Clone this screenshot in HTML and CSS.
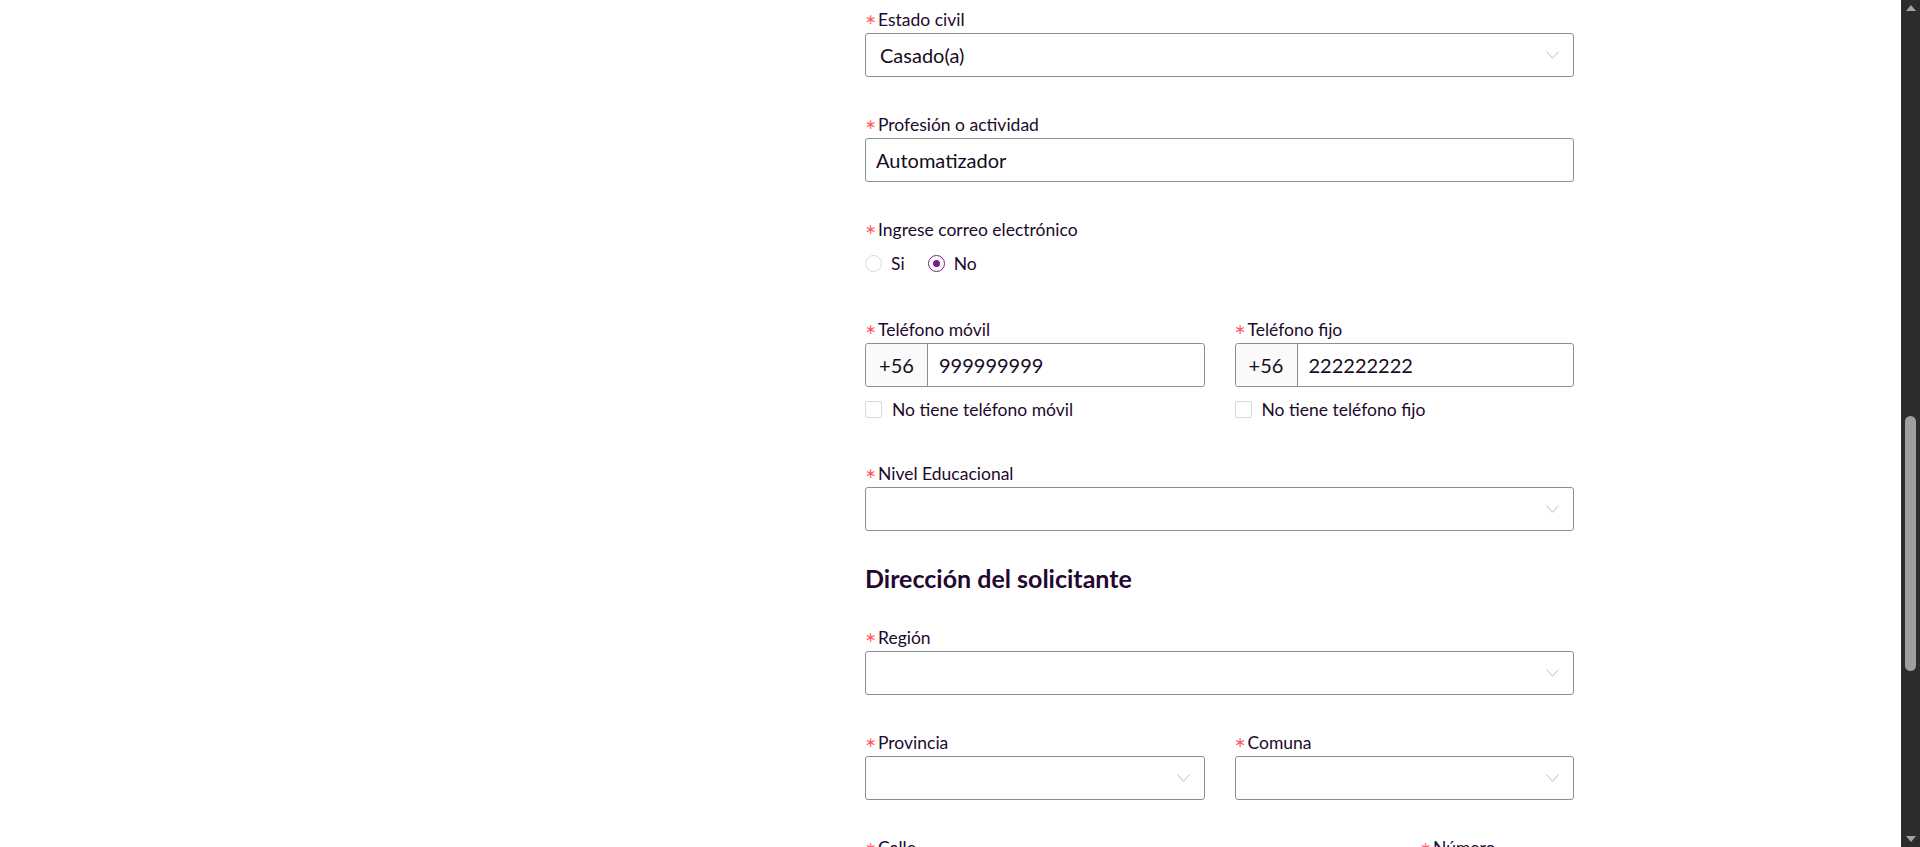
FILE: index.html
```html
<!DOCTYPE html>
<html lang="es">
<head>
<meta charset="utf-8">
<title>Formulario</title>
<link rel="stylesheet" href="styles.css">
</head>
<body>
<div class="screen">
  <main class="page">
    <form class="form">
      <div class="item">
        <div class="label"><span class="req">∗</span>Estado civil</div>
        <div class="control select"><span class="value">Casado(a)</span><svg class="chev" width="13" height="8" viewBox="0 0 13 8"><polyline points="0.5,0.5 6.5,7.3 12.5,0.5" fill="none" stroke="#bcbcbc" stroke-width="1"/></svg></div>
      </div>

      <div class="item">
        <div class="label"><span class="req">∗</span>Profesión o actividad</div>
        <div class="control input"><span class="value">Automatizador</span></div>
      </div>

      <div class="item">
        <div class="label"><span class="req">∗</span>Ingrese correo electrónico</div>
        <div class="radios">
          <span class="radio-opt"><span class="radio"></span>Si</span>
          <span class="radio-opt"><span class="radio checked"></span>No</span>
        </div>
      </div>

      <div class="item item-phone">
        <div class="cols">
          <div class="col">
            <div class="label"><span class="req">∗</span>Teléfono móvil</div>
            <div class="control phone"><span class="addon">+56</span><span class="value">999999999</span></div>
            <div class="check"><span class="box"></span>No tiene teléfono móvil</div>
          </div>
          <div class="col">
            <div class="label"><span class="req">∗</span>Teléfono fijo</div>
            <div class="control phone"><span class="addon">+56</span><span class="value">222222222</span></div>
            <div class="check"><span class="box"></span>No tiene teléfono fijo</div>
          </div>
        </div>
      </div>

      <div class="item item-last">
        <div class="label"><span class="req">∗</span>Nivel Educacional</div>
        <div class="control select"><span class="value"></span><svg class="chev" width="13" height="8" viewBox="0 0 13 8"><polyline points="0.5,0.5 6.5,7.3 12.5,0.5" fill="none" stroke="#bcbcbc" stroke-width="1"/></svg></div>
      </div>

      <h2 class="heading">Dirección del solicitante</h2>

      <div class="item">
        <div class="label"><span class="req">∗</span>Región</div>
        <div class="control select"><span class="value"></span><svg class="chev" width="13" height="8" viewBox="0 0 13 8"><polyline points="0.5,0.5 6.5,7.3 12.5,0.5" fill="none" stroke="#bcbcbc" stroke-width="1"/></svg></div>
      </div>

      <div class="item">
        <div class="cols">
          <div class="col">
            <div class="label"><span class="req">∗</span>Provincia</div>
            <div class="control select"><span class="value"></span><svg class="chev" width="13" height="8" viewBox="0 0 13 8"><polyline points="0.5,0.5 6.5,7.3 12.5,0.5" fill="none" stroke="#bcbcbc" stroke-width="1"/></svg></div>
          </div>
          <div class="col">
            <div class="label"><span class="req">∗</span>Comuna</div>
            <div class="control select"><span class="value"></span><svg class="chev" width="13" height="8" viewBox="0 0 13 8"><polyline points="0.5,0.5 6.5,7.3 12.5,0.5" fill="none" stroke="#bcbcbc" stroke-width="1"/></svg></div>
          </div>
        </div>
      </div>

      <div class="item">
        <div class="cols cols-street">
          <div class="col">
            <div class="label"><span class="req">∗</span>Calle</div>
            <div class="control input"><span class="value"></span></div>
          </div>
          <div class="col">
            <div class="label"><span class="req">∗</span>Número</div>
            <div class="control input"><span class="value"></span></div>
          </div>
        </div>
      </div>
    </form>
  </main>
  <div class="scrollbar">
    <span class="arrow up"></span>
    <span class="track"><span class="thumb"></span></span>
    <span class="arrow down"></span>
  </div>
</div>
</body>
</html>
```

FILE: styles.css
```css
* { box-sizing: border-box; }

html, body {
  margin: 0;
  padding: 0;
  height: 847px;
  overflow: hidden;
  background: #ffffff;
}

body {
  font-family: Lato, "Open Sans", sans-serif;
  color: #1d0a2c;
}

.screen {
  display: flex;
  height: 847px;
}

.page {
  flex: 1;
  overflow: hidden;
  padding: 8px 0 0 865px;
}

.form {
  width: 709px;
}

.item {
  margin-bottom: 36px;
}

.item-phone {
  margin-bottom: 43px;
}

.item-last {
  margin-bottom: 35px;
}

.label {
  display: flex;
  align-items: center;
  height: 24px;
  padding-bottom: 2px;
  margin-bottom: 1px;
  font-size: 17.5px;
  color: #1d0a2c;
  white-space: nowrap;
}

.req {
  width: 13px;
  flex: none;
  font-family: "DejaVu Sans", sans-serif;
  font-size: 14px;
  color: #ff5a5f;
  line-height: 1;
}

.control {
  height: 44px;
  border: 1px solid #8e8e8e;
  border-radius: 3px;
  display: flex;
  align-items: center;
  font-size: 20px;
  color: #160b22;
  background: #fff;
}

.select {
  padding: 0 14px 0 14px;
  justify-content: space-between;
}

.input {
  padding: 0 10px;
}

.value {
  white-space: nowrap;
}

.chev {
  flex: none;
  display: block;
}

.radios {
  display: flex;
  align-items: center;
  height: 39px;
  padding-top: 1px;
  gap: 23px;
  font-size: 17.5px;
}

.radio-opt {
  display: flex;
  align-items: center;
  gap: 9px;
}

.radio {
  width: 17px;
  height: 17px;
  border: 1px solid #d9d9d9;
  border-radius: 50%;
  display: flex;
  align-items: center;
  justify-content: center;
}

.radio.checked {
  border-color: #7e1c87;
}

.radio.checked::after {
  content: "";
  width: 7px;
  height: 7px;
  border-radius: 50%;
  background: #7e1c87;
}

.cols {
  display: grid;
  grid-template-columns: 1fr 1fr;
  gap: 30px;
}

.cols-street {
  grid-template-columns: 1fr 154px;
}

.phone {
  padding: 0;
}

.phone .addon {
  width: 62px;
  height: 100%;
  flex: none;
  display: flex;
  align-items: center;
  justify-content: center;
  background: #fafafa;
  border-right: 1px solid #8e8e8e;
  border-radius: 3px 0 0 3px;
}

.phone .value {
  padding-left: 11px;
}

.check {
  display: flex;
  align-items: center;
  gap: 10px;
  height: 19px;
  margin-top: 13px;
  font-size: 17.5px;
  color: #1d0a2c;
}

.check .box {
  width: 17px;
  height: 17px;
  border: 1px solid #d9d9d9;
  border-radius: 2px;
  background: #fff;
}

.heading {
  margin: 0 0 36px;
  height: 24px;
  line-height: 24px;
  font-size: 25px;
  font-weight: 700;
  color: #24082f;
}

.scrollbar {
  width: 19px;
  flex: none;
  background: #2c2c2c;
  display: flex;
  flex-direction: column;
  align-items: center;
}

.arrow {
  width: 0;
  height: 0;
  border-left: 5px solid transparent;
  border-right: 5px solid transparent;
  flex: none;
}

.arrow.up {
  margin-top: 5px;
  border-bottom: 6px solid #a3a3a3;
}

.arrow.down {
  margin-bottom: 5px;
  border-top: 6px solid #a3a3a3;
}

.track {
  flex: 1;
  width: 100%;
  padding-top: 405px;
}

.thumb {
  display: block;
  width: 11px;
  height: 255px;
  margin: 0 auto;
  border-radius: 6px;
  background: #9f9f9f;
}
```
